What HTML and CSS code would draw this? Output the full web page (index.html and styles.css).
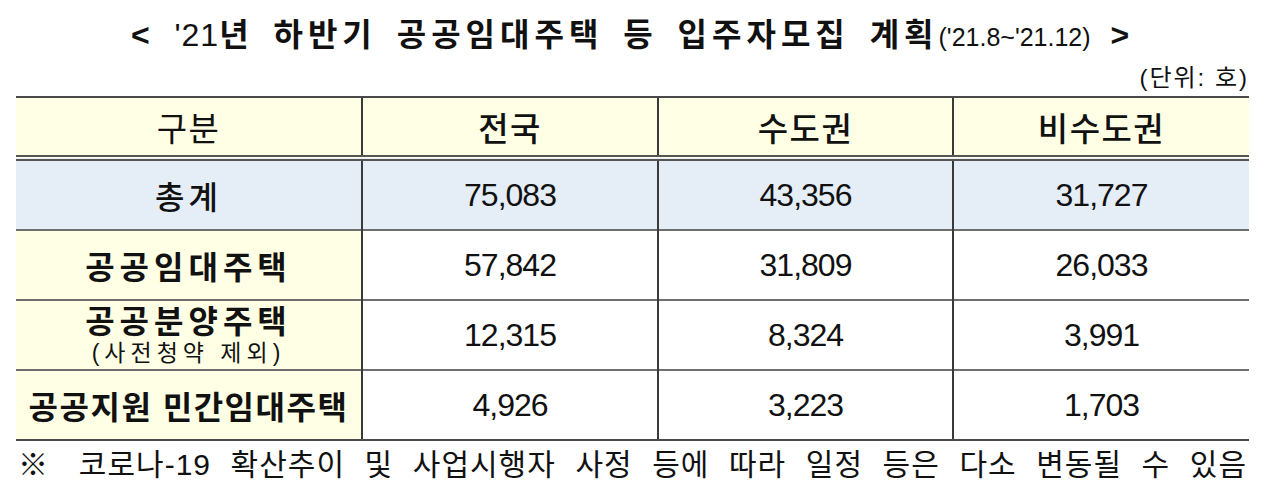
FILE: index.html
```html
<!DOCTYPE html>
<html lang="ko">
<head>
<meta charset="utf-8">
<title>'21년 하반기 공공임대주택 등 입주자모집 계획</title>
<link rel="stylesheet" href="styles.css">
</head>
<body>
<div class="page">
  <h1 class="title"><span class="t-main">&lt; <span class="t-num">'21</span>년 하반기 공공임대주택 등 입주자모집 계획</span><span class="t-sub">('21.8~'21.12)</span><span class="t-main"> &gt;</span></h1>
  <div class="unit">(단위: 호)</div>
  <table class="plan">
    <colgroup>
      <col class="c1"><col class="c2"><col class="c3"><col class="c4">
    </colgroup>
    <thead>
      <tr class="head">
        <th class="h-light">구분</th>
        <th>전국</th>
        <th>수도권</th>
        <th>비수도권</th>
      </tr>
    </thead>
    <tbody>
      <tr class="total">
        <td class="label total-label">총계</td>
        <td>75,083</td>
        <td>43,356</td>
        <td>31,727</td>
      </tr>
      <tr>
        <td class="label wide">공공임대주택</td>
        <td>57,842</td>
        <td>31,809</td>
        <td>26,033</td>
      </tr>
      <tr>
        <td class="label wide"><div class="two">공공분양주택</div><div class="note">(사전청약 제외)</div></td>
        <td>12,315</td>
        <td>8,324</td>
        <td>3,991</td>
      </tr>
      <tr>
        <td class="label">공공지원 민간임대주택</td>
        <td>4,926</td>
        <td>3,223</td>
        <td>1,703</td>
      </tr>
    </tbody>
  </table>
  <p class="foot">※ 코로나-19 확산추이 및 사업시행자 사정 등에 따라 일정 등은 다소 변동될 수 있음</p>
</div>
</body>
</html>
```
FILE: styles.css
```css
html, body {
  margin: 0;
  padding: 0;
  background: #ffffff;
}
body {
  font-family: "Liberation Sans", "Noto Sans CJK KR", sans-serif;
  color: #111;
}
.page {
  width: 1265px;
  padding: 14px 0 0 16px;
  box-sizing: border-box;
}
.title {
  margin: 0;
  width: 1233px;
  height: 42px;
  text-align: center;
  font-size: 32px;
  line-height: 42px;
  font-weight: 700;
  word-spacing: 6px;
  letter-spacing: 5px;
  white-space: nowrap;
}
.t-num {
  font-weight: 400;
  letter-spacing: 1px;
}
.t-sub {
  font-size: 25px;
  font-weight: 400;
  letter-spacing: 0;
  word-spacing: 0;
}
.unit {
  width: 1233px;
  height: 28px;
  text-align: right;
  font-size: 24px;
  line-height: 28px;
  letter-spacing: 2px;
  margin-top: 8px;
  margin-bottom: 4px;
  white-space: nowrap;
}
.plan {
  border-collapse: collapse;
  table-layout: fixed;
  width: 1233px;
}
.c1 { width: 346px; }
.c2 { width: 296px; }
.c3 { width: 295px; }
.c4 { width: 296px; }
.plan th, .plan td {
  text-align: center;
  vertical-align: middle;
  padding: 0;
  border-left: 2px solid #3a3a3a;
  border-top: 2px solid #6e6e6e;
  white-space: nowrap;
}
.plan th:first-child, .plan td:first-child {
  border-left: none;
}
.head th {
  height: 57px;
  background: #ffffe5;
  font-size: 33px;
  font-weight: 500;
  letter-spacing: 1.5px;
  border-top: 2px solid #4a4a4a;
  border-bottom: 6px double #555;
}
.head th.h-light {
  font-weight: 400;
}
.plan td {
  height: 68px;
  font-size: 32px;
  letter-spacing: -1px;
}
.total td {
  background: #e5edf7;
  border-top: none;
}
.plan td.label {
  background: #ffffe5;
  font-weight: 700;
  font-size: 32px;
  letter-spacing: 1.5px;
}
.plan td.label.wide {
  letter-spacing: 5px;
}
.plan .total td.total-label {
  background: #e5edf7;
  font-weight: 500;
  letter-spacing: 4px;
}
.two {
  line-height: 36px;
}
.note {
  font-size: 23px;
  font-weight: 400;
  line-height: 26px;
  letter-spacing: 5px;
}
.plan tbody tr:last-child td {
  border-bottom: 2px solid #4a4a4a;
}
.foot {
  margin: 4px 0 0 2px;
  width: 1229px;
  font-size: 30px;
  line-height: 40px;
  letter-spacing: 1px;
  text-align: justify;
  text-align-last: justify;
  white-space: nowrap;
}
```
